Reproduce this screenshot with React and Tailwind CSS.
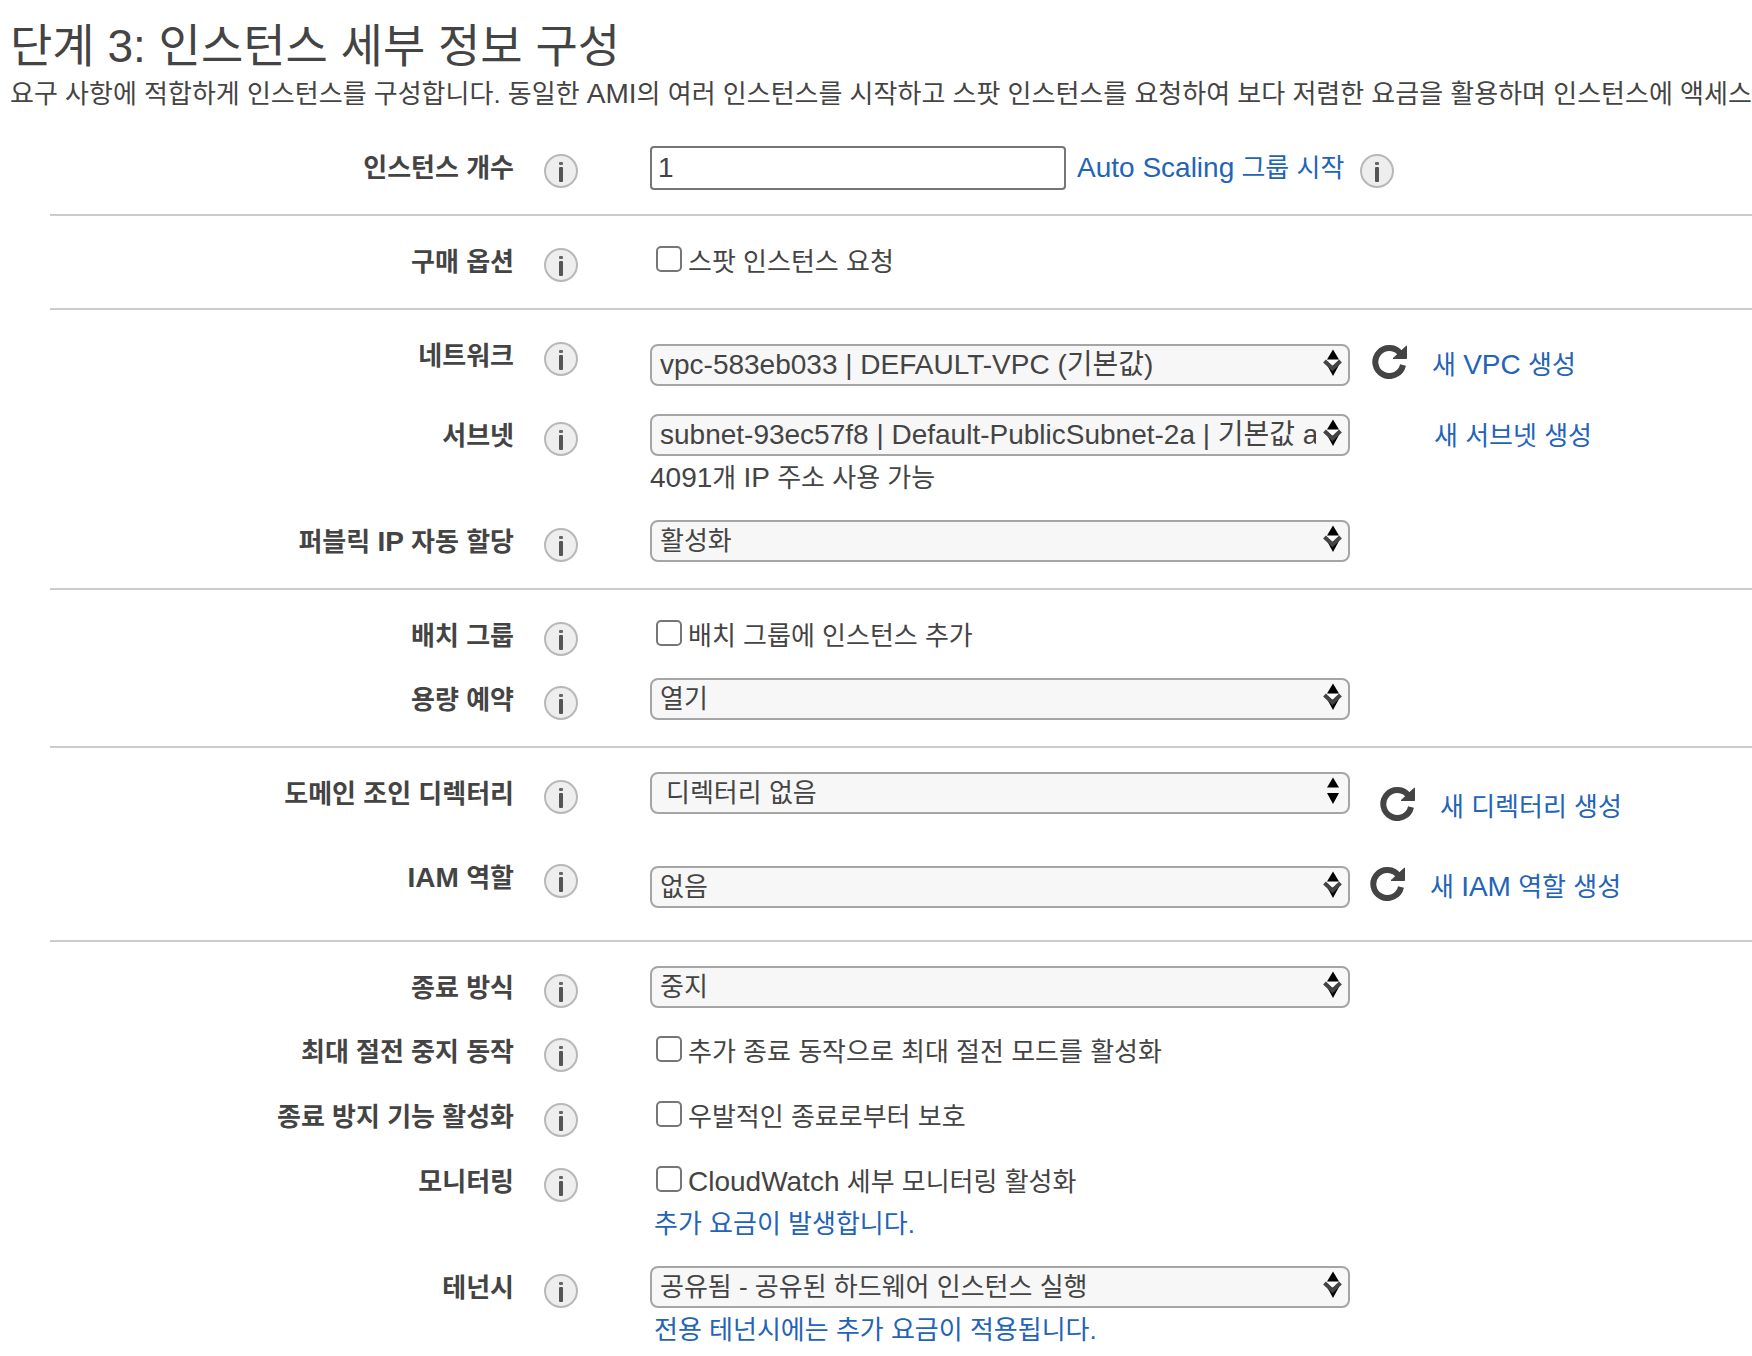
import React from "react";

const InfoButton = ({ topic }) => (
  <button type="button" aria-label={`${topic} 정보`} className="shrink-0 size-[34px]">
    <svg viewBox="0 0 34 34" className="size-full">
      <circle cx="17" cy="17" r="16" fill="#eeeeee" stroke="#b8b8b8" strokeWidth="2" />
      <rect x="15" y="8" width="4" height="3" rx="1" fill="#666666" />
      <rect x="15" y="13" width="4" height="15" rx="1" fill="#555555" />
    </svg>
  </button>
);

const RefreshButton = ({ topic }) => (
  <button type="button" aria-label={`${topic} 새로 고침`} className="shrink-0 size-[35px]">
    <svg viewBox="0 0 35 35" className="size-full">
      <path d="M28.8 10 A14 14 0 1 0 31 21" fill="none" stroke="#444444" strokeWidth="6" />
      <path d="M34.5 2 V14.5 H21 Z" fill="#444444" stroke="#444444" strokeLinejoin="round" />
    </svg>
  </button>
);

// latin runs are set slightly larger than hangul
const Latin = ({ children }) => <span className="text-[28px]">{children}</span>;

const Select = ({ id, value, className = "pl-2 text-[26px]", plain = false }) => (
  <div className="relative w-[700px]">
    <select
      id={id}
      className={`block w-full h-[42px] pr-8 appearance-none rounded-lg border-2 border-[#a5a5a5] bg-[#f7f7f7] leading-[36px] ${className}`}
    >
      <option>{value}</option>
    </select>
    <svg viewBox="0 0 22 42" className="absolute top-0 right-1.5 w-[22px] h-[42px] pointer-events-none">
      <path d="M11 5.5 L17 15.5 H5 Z" fill="#000000" />
      <path d="M5 21 H17 L11 32 Z" fill="#000000" />
      {!plain && (
        <>
          <path d="M4.5 16 H16.5 L10.5 22 Z" fill="#ffffff" />
          <path d="M2.5 17 L10.5 24.5 L18.5 17" fill="none" stroke="#444444" strokeWidth="4" />
        </>
      )}
    </svg>
  </div>
);

const Checkbox = ({ id, children }) => (
  <div className="flex items-center h-11 pl-1.5">
    <input
      id={id}
      type="checkbox"
      className="size-[26px] mb-1.5 mr-1.5 appearance-none rounded-[5px] border-2 border-[#767676] bg-white checked:bg-[#2a66b9]"
    />
    <label htmlFor={id}>{children}</label>
  </div>
);

const Link = ({ children, className = "" }) => (
  <a href="#" className={`text-[#2363b8] hover:underline ${className}`}>
    {children}
  </a>
);

const Section = ({ children }) => (
  <section className="ml-[50px] pt-6 pb-1 border-b-2 border-[#cccccc] last:border-b-0">
    {children}
  </section>
);

const Row = ({ id, label, topic, className = "min-h-16", children }) => (
  <div className={`flex items-start pb-5 ${className}`}>
    <label htmlFor={id} className="shrink-0 w-[464px] h-11 leading-[44px] text-right font-bold">
      {label}
    </label>
    <div className="shrink-0 mt-2 ml-[30px] mr-[72px] h-[34px]">
      <InfoButton topic={topic || label} />
    </div>
    {children}
  </div>
);

const App = () => {
  return (
    <main className="overflow-hidden bg-white whitespace-nowrap text-[26px] leading-[36px] text-[#444444] font-['Liberation_Sans','Noto_Sans_CJK_KR',sans-serif]">
      <header className="pt-4 pl-2.5">
        <h1 className="text-[46px] leading-[60px]">단계 3: 인스턴스 세부 정보 구성</h1>
        <p>
          요구 사항에 적합하게 인스턴스를 구성합니다. 동일한 <Latin>AMI</Latin>의 여러 인스턴스를
          시작하고 스팟 인스턴스를 요청하여 보다 저렴한 요금을 활용하며 인스턴스에 액세스
        </p>
      </header>

      <form className="mt-2.5">
        <Section>
          <Row id="count" label="인스턴스 개수">
            <input
              id="count"
              type="text"
              defaultValue="1"
              className="w-[416px] h-11 pl-1.5 rounded-sm border-2 border-[#767676] bg-white text-[28px]"
            />
            <Link className="ml-[11px] mr-4 leading-[44px]">
              <Latin>Auto Scaling</Latin> 그룹 시작
            </Link>
            <div className="mt-2 h-[34px]">
              <InfoButton topic="Auto Scaling" />
            </div>
          </Row>
        </Section>

        <Section>
          <Row id="spot" label="구매 옵션">
            <Checkbox id="spot">스팟 인스턴스 요청</Checkbox>
          </Row>
        </Section>

        <Section>
          <Row id="network" label="네트워크" className="min-h-20">
            <div className="flex items-start pt-2.5">
              <Select
                id="network"
                value="vpc-583eb033 | DEFAULT-VPC (기본값)"
                className="pl-2 text-[28px]"
              />
              <div className="flex items-start ml-[22px] gap-[25px]">
                <RefreshButton topic="네트워크" />
                <Link className="pt-[3px]">
                  새 <Latin>VPC</Latin> 생성
                </Link>
              </div>
            </div>
          </Row>
          <Row id="subnet" label="서브넷" className="min-h-[106px]">
            <div>
              <Select
                id="subnet"
                value="subnet-93ec57f8 | Default-PublicSubnet-2a | 기본값 ap-northeast-2a"
                className="pl-2 text-[28px]"
              />
              <p className="leading-[44px]">
                <Latin>4091</Latin>개 <Latin>IP</Latin> 주소 사용 가능
              </p>
            </div>
            <Link className="ml-[84px] leading-[44px]">새 서브넷 생성</Link>
          </Row>
          <Row
            id="public-ip"
            topic="퍼블릭 IP 자동 할당"
            label={
              <>
                퍼블릭 <Latin>IP</Latin> 자동 할당
              </>
            }
          >
            <Select id="public-ip" value="활성화" />
          </Row>
        </Section>

        <Section>
          <Row id="placement" label="배치 그룹">
            <Checkbox id="placement">배치 그룹에 인스턴스 추가</Checkbox>
          </Row>
          <Row id="capacity" label="용량 예약">
            <Select id="capacity" value="열기" />
          </Row>
        </Section>

        <Section>
          <Row id="directory" label="도메인 조인 디렉터리" className="min-h-[84px]">
            <Select id="directory" value="디렉터리 없음" className="pl-3.5 text-[26px]" plain />
            <div className="flex items-start pt-3.5 ml-[30px] gap-[25px]">
              <RefreshButton topic="디렉터리" />
              <Link className="pt-[3px]">새 디렉터리 생성</Link>
            </div>
          </Row>
          <Row
            id="iam"
            topic="IAM 역할"
            label={
              <>
                <Latin>IAM</Latin> 역할
              </>
            }
            className="min-h-20"
          >
            <div className="flex items-start pt-2.5">
              <Select id="iam" value="없음" />
              <div className="flex items-start ml-5 gap-[25px]">
                <RefreshButton topic="IAM 역할" />
                <Link className="pt-[3px]">
                  새 <Latin>IAM</Latin> 역할 생성
                </Link>
              </div>
            </div>
          </Row>
        </Section>

        <Section>
          <Row id="shutdown" label="종료 방식">
            <Select id="shutdown" value="중지" />
          </Row>
          <Row id="hibernate" label="최대 절전 중지 동작" className="min-h-[65px]">
            <Checkbox id="hibernate">추가 종료 동작으로 최대 절전 모드를 활성화</Checkbox>
          </Row>
          <Row id="protect" label="종료 방지 기능 활성화" className="min-h-[65px]">
            <Checkbox id="protect">우발적인 종료로부터 보호</Checkbox>
          </Row>
          <Row id="monitoring" label="모니터링" className="min-h-[106px]">
            <div>
              <Checkbox id="monitoring">
                <Latin>CloudWatch</Latin> 세부 모니터링 활성화
              </Checkbox>
              <Link className="block pl-1 leading-[40px]">추가 요금이 발생합니다.</Link>
            </div>
          </Row>
          <Row id="tenancy" label="테넌시">
            <div>
              <Select id="tenancy" value="공유됨 - 공유된 하드웨어 인스턴스 실행" />
              <Link className="block pl-1 leading-[44px]">전용 테넌시에는 추가 요금이 적용됩니다.</Link>
            </div>
          </Row>
        </Section>
      </form>
    </main>
  );
};

export default App;
